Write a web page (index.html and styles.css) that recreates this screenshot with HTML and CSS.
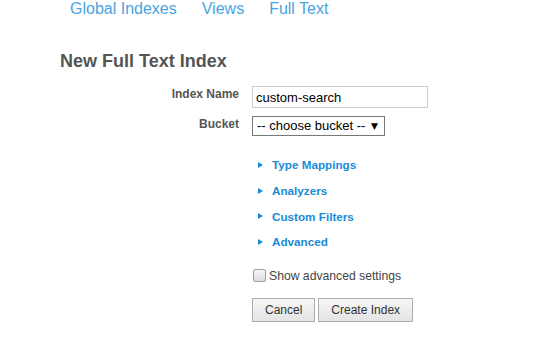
FILE: index.html
```html
<!DOCTYPE html>
<html lang="en">
<head>
  <meta charset="UTF-8">
  <title>New Full Text Index</title>
  <link rel="stylesheet" href="styles.css">
</head>
<body>
  <nav class="tabs">
    <a href="#">Global Indexes</a>
    <a href="#">Views</a>
    <a href="#">Full Text</a>
  </nav>

  <h1>New Full Text Index</h1>

  <form class="index-form">
    <div class="form-row">
      <label for="indexName">Index Name</label>
      <input type="text" id="indexName" value="custom-search">
    </div>

    <div class="form-row">
      <label for="bucket">Bucket</label>
      <div class="select-box" id="bucket">-- choose bucket -- <span class="caret">&#9660;</span></div>
    </div>

    <div class="sections">
      <a href="#" class="disclosure">Type Mappings</a>
      <a href="#" class="disclosure">Analyzers</a>
      <a href="#" class="disclosure">Custom Filters</a>
      <a href="#" class="disclosure">Advanced</a>
    </div>

    <label class="check-row">
      <span class="check-box"></span> Show advanced settings
    </label>

    <div class="buttons">
      <button type="button">Cancel</button>
      <button type="button">Create Index</button>
    </div>
  </form>
</body>
</html>
```

FILE: styles.css
```css
body {
  font-family: "Liberation Sans", Arial, sans-serif;
  color: #555;
  margin: 0;
  padding: 0 0 0 60px;
}

.tabs {
  display: flex;
  gap: 25px;
  padding-left: 10px;
  margin-top: -5px;
}

.tabs a {
  font-size: 16px;
  color: #4aa3df;
  text-decoration: none;
  line-height: 28px;
}

h1 {
  font-size: 18px;
  margin: 26px 0 0;
  line-height: 24px;
  color: #555;
}

.index-form {
  margin-top: 13px;
}

.form-row {
  display: flex;
  align-items: flex-start;
  margin-bottom: 8px;
}

.form-row label {
  width: 179px;
  text-align: right;
  font-size: 12px;
  font-weight: bold;
  margin-right: 13px;
  line-height: 14px;
  padding-top: 1px;
}

.form-row input[type="text"] {
  width: 176px;
  height: 22px;
  box-sizing: border-box;
  border: 1px solid #ccc;
  padding: 0 3px;
  font-family: inherit;
  font-size: 13px;
  color: #000;
}

.select-box {
  width: 133px;
  height: 20px;
  box-sizing: border-box;
  border: 1px solid #777;
  padding: 0 4px;
  font-size: 13px;
  line-height: 18px;
  color: #000;
}

.caret {
  font-family: "DejaVu Sans", sans-serif;
  font-size: 9px;
  vertical-align: 1px;
  margin-left: 2px;
}

.sections {
  display: flex;
  flex-direction: column;
  padding: 8px 0 0 198px;
}

.disclosure {
  display: flex;
  align-items: center;
  height: 25.7px;
  font-size: 11.7px;
  font-weight: bold;
  color: #1a8bd6;
  text-decoration: none;
}

.disclosure::before {
  content: "";
  border-left: 5px solid #1a8bd6;
  border-top: 3px solid transparent;
  border-bottom: 3px solid transparent;
  margin-right: 9px;
}

.check-row {
  display: flex;
  align-items: center;
  gap: 3px;
  margin: 14px 0 0 193px;
  font-size: 12.2px;
  color: #444;
}

.check-box {
  width: 11px;
  height: 11px;
  border: 1px solid #a0a0a0;
  border-radius: 2px;
  background: linear-gradient(#f4f4f4, #dedede);
}

.buttons {
  display: flex;
  gap: 3px;
  margin: 15px 0 0 192px;
}

button {
  font-family: inherit;
  font-size: 12px;
  color: #333;
  height: 24px;
  padding: 0 12px;
  border: 1px solid #adadad;
  background: linear-gradient(#f6f6f6, #e4e4e4);
  border-radius: 0;
}
```
